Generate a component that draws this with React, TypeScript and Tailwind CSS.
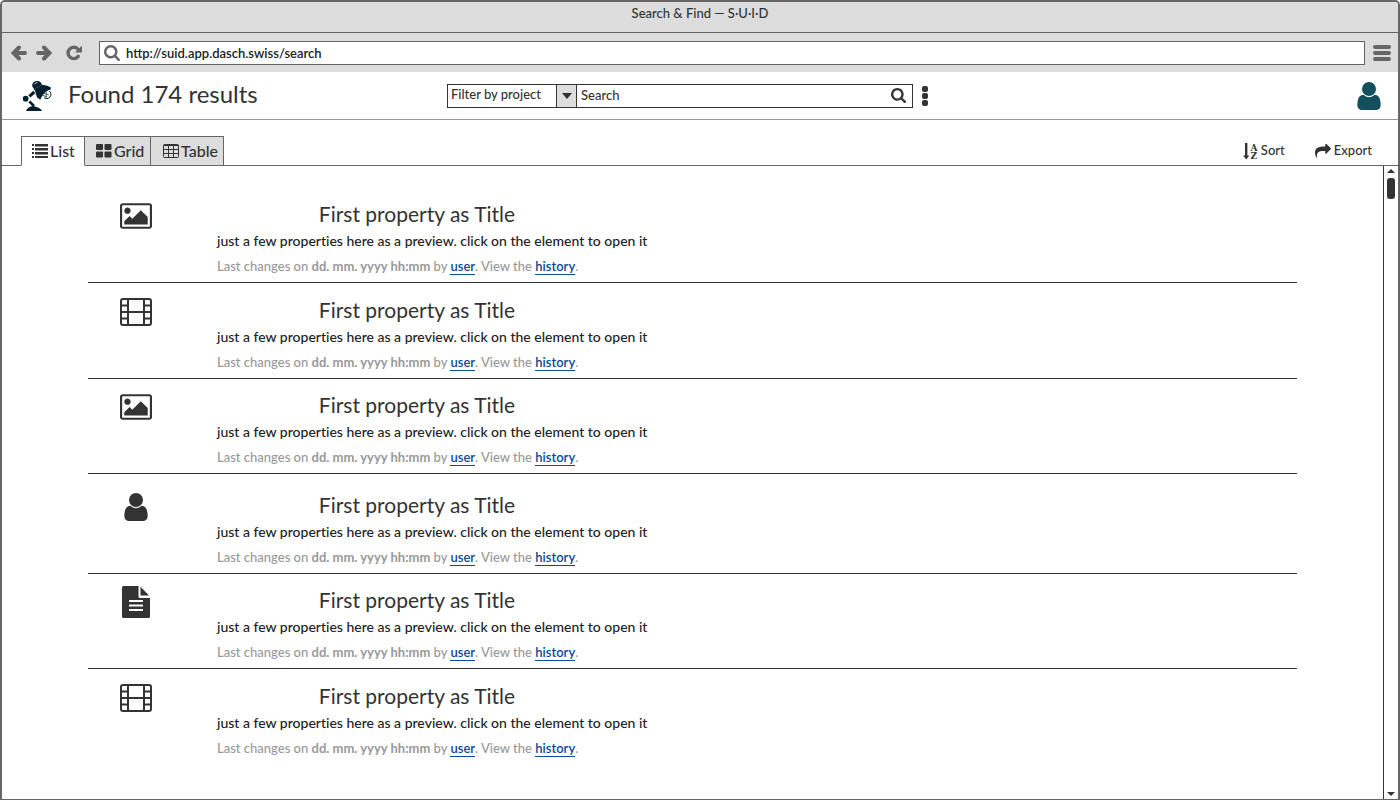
import type { ReactNode } from "react";

type IconProps = { className?: string };

function UserIcon({ className }: IconProps) {
  return (
    <svg viewBox="256 128 1280 1536" className={className} fill="currentColor" aria-hidden="true">
      <path d="M1536 1399q0 109-62.5 187t-150.5 78h-854q-88 0-150.5-78t-62.5-187q0-85 8.5-160.5t31.5-152 58.5-131 94-89 134.5-34.5q131 128 313 128t313-128q76 0 134.5 34.5t94 89 58.5 131 31.5 152 8.5 160.5zm-256-887q0 159-112.5 271.5t-271.5 112.5-271.5-112.5-112.5-271.5 112.5-271.5 271.5-112.5 271.5 112.5 112.5 271.5z" />
    </svg>
  );
}

function ImageIcon({ className }: IconProps) {
  return (
    <svg viewBox="-64 128 1920 1536" className={className} fill="currentColor" aria-hidden="true">
      <path d="M576 576q0 80-56 136t-136 56-136-56-56-136 56-136 136-56 136 56 56 136zm1024 384v448h-1408v-192l320-320 160 160 512-512zm96-704h-1600q-13 0-22.5 9.5t-9.5 22.5v1216q0 13 9.5 22.5t22.5 9.5h1600q13 0 22.5-9.5t9.5-22.5v-1216q0-13-9.5-22.5t-22.5-9.5zm160 32v1216q0 66-47 113t-113 47h-1600q-66 0-113-47t-47-113v-1216q0-66 47-113t113-47h1600q66 0 113 47t47 113z" />
    </svg>
  );
}

function FilmIcon({ className }: IconProps) {
  return (
    <svg viewBox="0 0 32 28" className={className} fill="none" stroke="currentColor" strokeWidth="2" aria-hidden="true">
      <rect x="1" y="1" width="30" height="26" rx="2" />
      <path d="M8 1v26M24 1v26M1 7.5h7M1 14h30M1 20.5h7M24 7.5h7M24 20.5h7" />
    </svg>
  );
}

function DocumentIcon({ className }: IconProps) {
  return (
    <svg viewBox="0 0 28 32" className={className} fill="currentColor" aria-hidden="true">
      <path
        fillRule="evenodd"
        d="M1.5 0H16.5V10.5Q16.5 12 18 12H28V30.5Q28 32 26.5 32H1.5Q0 32 0 30.5V1.5Q0 0 1.5 0ZM7 14V16H21V14ZM7 18.500V20.500H21V18.500ZM7 23V25H21V23Z"
      />
      <path d="M18.500 .8 27 9.500H18.500Z" />
    </svg>
  );
}

function SearchIcon({ className }: IconProps) {
  return (
    <svg viewBox="64 128 1664 1664" className={className} fill="currentColor" aria-hidden="true">
      <path d="M1216 832q0-185-131.5-316.5t-316.5-131.5-316.5 131.5-131.5 316.5 131.5 316.5 316.5 131.5 316.5-131.5 131.5-316.5zm512 832q0 52-38 90t-90 38q-54 0-90-38l-343-342q-179 124-399 124-143 0-273.5-55.5t-225-150-150-225-55.5-273.5 55.5-273.5 150-225 225-150 273.5-55.500 273.5 55.5 225 150 150 225 55.5 273.500q0 220-124 399l343 343q37 37 37 90z" />
    </svg>
  );
}

function ArrowIcon({ className }: IconProps) {
  return (
    <svg viewBox="0 0 16 16" className={className} fill="none" stroke="currentColor" strokeLinecap="round" aria-hidden="true">
      <path d="M4 8H14" strokeWidth="4" />
      <path d="M8 2.500 2.600 8 8 13.500" strokeWidth="4" strokeLinejoin="miter" />
    </svg>
  );
}

function ReloadIcon({ className }: IconProps) {
  return (
    <svg viewBox="0 0 16 16" className={className} aria-hidden="true">
      <path d="M12.300 11.400A5.700 5.700 0 1 1 11.800 3.900" fill="none" stroke="currentColor" strokeWidth="3.400" strokeLinecap="round" />
      <path d="M16 .8V7.500H8.800Z" fill="currentColor" />
    </svg>
  );
}

function LampLogo({ className }: IconProps) {
  return (
    <svg viewBox="0 0 90 90" className={className} fill="currentColor" aria-hidden="true">
      <path d="M31 16C29 7 36 0 45 0C53 0 58 4 60 12L36 25Z" />
      <path d="M36 25 61 11C71 13 80 14 87 20L85 26C77 27 70 32 65 39C60 46 57 51 55 56L46 50C41 43 43 34 36 25Z" />
      <path d="M66 50A11 11 0 0 0 82 30" fill="none" stroke="currentColor" strokeWidth="3" />
      <path d="M62 43 76 48M66 37 80 42M74 32 71 50" stroke="currentColor" strokeWidth="2" />
      <path d="M22 46 37 33" stroke="currentColor" strokeWidth="9" />
      <circle cx="11" cy="53" r="8.500" />
      <path d="M22 61 36 75" stroke="currentColor" strokeWidth="8" />
      <path d="M12 90C14 82 22 78 32 75C45 77 57 82 60 90Z" />
      <path d="M37 10Q40 5 46 5" fill="none" stroke="white" strokeWidth="2.500" />
    </svg>
  );
}

function ListIcon() {
  return (
    <svg viewBox="0 0 16 14" className="h-[14px] w-4" fill="currentColor" aria-hidden="true">
      <path d="M0 0h2v2H0zM3 0h13v2H3zM0 4h2v2H0zM3 4h13v2H3zM0 8h2v2H0zM3 8h13v2H3zM0 12h2v2H0zM3 12h13v2H3z" />
      <path d="M3 2h13v.6H3zM3 6h13v.6H3zM3 10h13v.6H3z" />
    </svg>
  );
}

function GridIcon() {
  return (
    <svg viewBox="0 0 16 14" className="h-[14px] w-4" fill="currentColor" aria-hidden="true">
      <rect width="7" height="6" rx="1" />
      <rect x="8.500" width="7" height="6" rx="1" />
      <rect y="7.500" width="7" height="6" rx="1" />
      <rect x="8.500" y="7.500" width="7" height="6" rx="1" />
    </svg>
  );
}

function TableIcon() {
  return (
    <svg viewBox="0 0 16 14" className="h-[14px] w-4" fill="none" stroke="currentColor" aria-hidden="true">
      <rect x=".5" y=".5" width="15" height="13" rx="1" />
      <path d="M0 1.500h16M0 5.500h16M0 9.500h16M5.500 1v13M10.500 1v13" />
    </svg>
  );
}

function SortIcon() {
  return (
    <svg viewBox="0 0 15 17" className="h-[17px] w-[15px]" fill="currentColor" aria-hidden="true">
      <path d="M2 0h2.400v12.500h1.900L3.200 16.500 .1 12.500h1.900z" />
      <text x="7.500" y="7.500" fontSize="9" fontWeight="bold" fontFamily="DejaVu Serif, serif">A</text>
      <text x="7.500" y="16" fontSize="9" fontWeight="bold" fontFamily="DejaVu Serif, serif">Z</text>
    </svg>
  );
}

function ExportIcon() {
  return (
    <svg viewBox="0 128 1792 1536" className="h-[14px] w-4" fill="currentColor" aria-hidden="true">
      <path d="M1792 640q0 26-19 45l-512 512q-19 19-45 19t-45-19-19-45v-256h-224q-98 0-175.500 6t-154 21.500-133 42.500-105.500 69.500-80 101-48.500 138.500-17.500 181q0 55 5 123 0 6 2.500 23.500t2.500 26.500q0 15-8.500 25t-23.500 10q-16 0-28-17-7-9-13-22t-13.500-30-10.500-24q-127-285-127-451 0-199 53-333 162-403 875-403h224v-256q0-26 19-45t45-19 45 19l512 512q19 19 19 45z" />
    </svg>
  );
}

type Kind = "image" | "film" | "person" | "document";

const results: Kind[] = ["image", "film", "image", "person", "document", "film"];

const icons: Record<Kind, ReactNode> = {
  image: <ImageIcon className="h-[26px] w-8" />,
  film: <FilmIcon className="h-7 w-8" />,
  person: <UserIcon className="h-7 w-6" />,
  document: <DocumentIcon className="h-8 w-7" />,
};

const rowPadding: Record<Kind, string> = {
  image: "pt-3",
  film: "pt-[13px]",
  person: "pt-[17px]",
  document: "pt-3",
};

function ResultRow({ kind }: { kind: Kind }) {
  return (
    <li className={`flex border-b border-[#333] pb-[3px] last:border-b-0 ${rowPadding[kind]}`}>
      <div className="flex h-8 w-24 shrink-0 items-center justify-center">{icons[kind]}</div>
      <article className="pl-[33px]">
        <h2 className="w-[400px] text-center text-[21px] leading-7">First property as Title</h2>
        <p className="text-[14px] font-medium leading-[26px] text-[#222] [font-variant-ligatures:none]">
          just a few properties here as a preview. click on the element to open it
        </p>
        <p className="text-[13px] font-medium leading-[25px] text-[#999]">
          Last changes on <b>dd. mm. yyyy hh:mm</b> by{" "}
          <a href="#user" className="border-b border-[#0b4a94] font-semibold text-[#0b4a94]">user</a>. View the{" "}
          <a href="#history" className="border-b border-[#0b4a94] font-semibold text-[#0b4a94]">history</a>.
        </p>
      </article>
    </li>
  );
}

function Tab({ icon, label, active, className }: { icon: ReactNode; label: string; active?: boolean; className: string }) {
  return (
    <button
      type="button"
      role="tab"
      aria-selected={!!active}
      className={`flex h-[30px] items-center gap-[2px] border border-[#666] pb-px text-[16px] font-medium ${className} ${
        active ? "border-b-white bg-white" : "border-l-0 bg-[#ddd]"
      }`}
    >
      {icon}
      {label}
    </button>
  );
}

export default function App() {
  return (
    <div className="flex h-screen flex-col overflow-hidden rounded-t-[5px] border-x-2 border-b border-t-2 border-[#666] bg-white font-['Lato','Liberation_Sans',sans-serif] text-[#333]">
      <div className="h-[30px] shrink-0 bg-[#ddd] text-center text-[13px] font-medium leading-[23px]">Search &amp; Find — S·U·I·D</div>

      <div className="flex h-10 shrink-0 items-center border-t border-[#666] bg-[#ddd] pl-[9px] pr-[7px] text-[#666]">
        <button type="button" aria-label="Back"><ArrowIcon className="size-4" /></button>
        <button type="button" aria-label="Forward" className="ml-[9px]"><ArrowIcon className="size-4 rotate-180" /></button>
        <button type="button" aria-label="Reload" className="ml-[14px]"><ReloadIcon className="size-4" /></button>
        <label className="ml-[17px] flex h-6 grow items-center gap-[6px] border border-[#666] bg-white pl-1">
          <SearchIcon className="size-4" />
          <input aria-label="Address" defaultValue="http://suid.app.dasch.swiss/search" className="grow pt-[2px] text-[13px] font-semibold text-[#222] outline-none" />
        </label>
        <button type="button" aria-label="Menu" className="ml-2 flex w-[18px] flex-col gap-[2px]">
          <span className="h-1 rounded-full bg-[#666]" />
          <span className="h-1 rounded-full bg-[#666]" />
          <span className="h-1 rounded-full bg-[#666]" />
        </button>
      </div>

      <header className="flex h-12 shrink-0 items-center border-b border-[#999] pr-[17px]">
        <div className="flex w-[445px] shrink-0 items-center gap-4 pl-5">
          <LampLogo className="size-[30px] text-[#02202e]" />
          <h1 className="pb-[3px] text-[24px] leading-8">Found 174 results</h1>
        </div>
        <form className="flex items-center" onSubmit={(e) => e.preventDefault()}>
          <div className="relative flex h-6">
            <select aria-label="Filter by project" className="h-6 w-[130px] appearance-none border border-[#333] bg-white pb-px pl-[3px] text-[13px] font-medium">
              <option>Filter by project</option>
            </select>
            <span className="pointer-events-none absolute inset-y-px right-px flex w-5 items-center justify-center border-l border-[#333] bg-[#ddd]">
              <svg viewBox="0 0 10 6" className="h-[6px] w-[10px]" fill="currentColor" aria-hidden="true"><path d="M0 0h10L5 6z" /></svg>
            </span>
          </div>
          <div className="-ml-px flex h-6 w-[337px] items-center border border-[#333] pl-1 pr-[6px]">
            <input aria-label="Search" placeholder="Search" className="min-w-0 grow text-[13px] font-medium outline-none placeholder:text-[#333]" />
            <button type="submit" aria-label="Run search"><SearchIcon className="size-[15px]" /></button>
          </div>
          <button type="button" aria-label="More options" className="ml-[9px] flex flex-col gap-px">
            <span className="size-[6px] rounded-[2px] bg-[#333]" />
            <span className="size-[6px] rounded-[2px] bg-[#333]" />
            <span className="size-[6px] rounded-[2px] bg-[#333]" />
          </button>
        </form>
        <button type="button" aria-label="Account" className="ml-auto text-[#134f5c]"><UserIcon className="h-7 w-6" /></button>
      </header>

      <nav className="flex h-[46px] shrink-0 items-end border-b border-[#666] pl-[19px] pr-[26px]">
        <div role="tablist" className="-mb-px flex">
          <Tab icon={<ListIcon />} label="List" active className="w-16 pl-[10px]" />
          <Tab icon={<GridIcon />} label="Grid" className="w-[66px] pl-[11px]" />
          <Tab icon={<TableIcon />} label="Table" className="w-[73px] pl-3" />
        </div>
        <div className="ml-auto flex h-7 items-center gap-[30px] text-[13px] font-medium">
          <button type="button" className="flex items-center gap-[3px]"><SortIcon />Sort</button>
          <button type="button" className="flex items-center gap-[3px]"><ExportIcon />Export</button>
        </div>
      </nav>

      <div className="flex min-h-0 grow">
        <main className="grow overflow-hidden px-[86px] pt-[22px]">
          <ul>
            {results.map((kind, i) => (
              <ResultRow key={i} kind={kind} />
            ))}
          </ul>
        </main>
        <div className="flex w-[15px] shrink-0 flex-col items-center border-l border-[#333]">
          <svg viewBox="0 0 8 4" className="mt-[3px] h-1 w-2" fill="currentColor" aria-hidden="true"><path d="M0 4h8L4 0z" /></svg>
          <div className="mt-[5px] h-[21px] w-2 rounded-[3px] bg-[#333]" />
          <svg viewBox="0 0 8 4" className="mb-[3px] mt-auto h-1 w-2" fill="currentColor" aria-hidden="true"><path d="M0 0h8L4 4z" /></svg>
        </div>
      </div>
    </div>
  );
}
